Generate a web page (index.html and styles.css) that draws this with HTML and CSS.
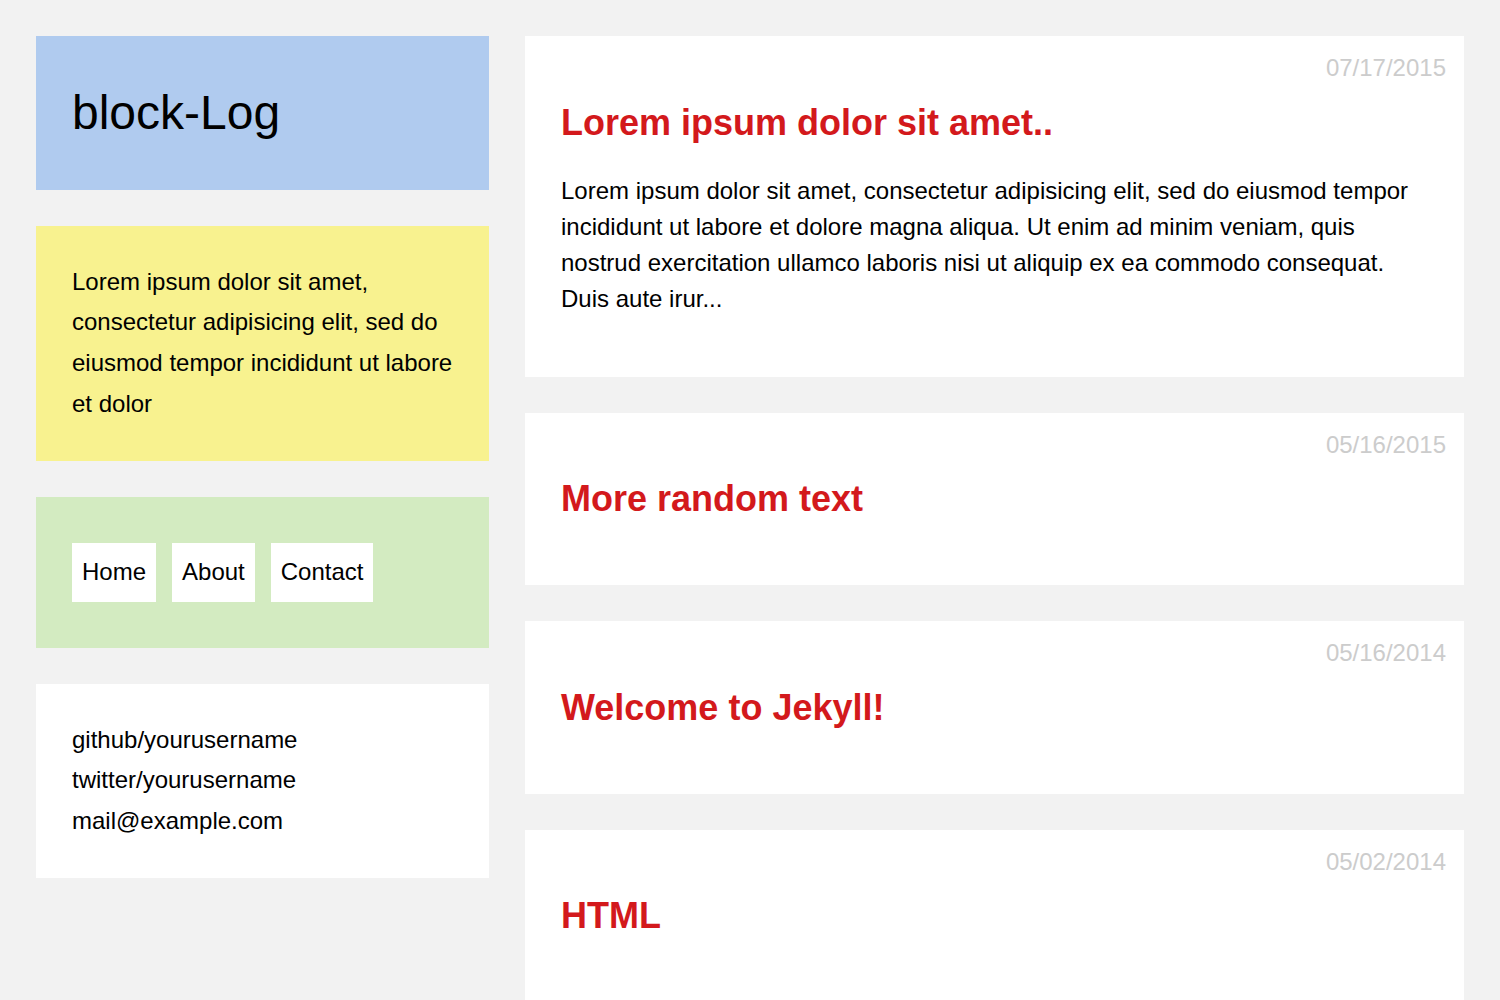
FILE: index.html
```html
<!DOCTYPE html>
<html lang="en">
<head>
<meta charset="utf-8">
<title>block-Log</title>
<link rel="stylesheet" href="styles.css">
</head>
<body>
<div class="page">
  <aside class="sidebar">
    <header class="box box-title">
      <h1 class="site-title">block-Log</h1>
    </header>
    <section class="box box-about">
      <p class="about-text">Lorem ipsum dolor sit amet, consectetur adipisicing elit, sed do eiusmod tempor incididunt ut labore et dolor</p>
    </section>
    <nav class="box box-nav">
      <a class="nav-link" href="#">Home</a>
      <a class="nav-link" href="#">About</a>
      <a class="nav-link" href="#">Contact</a>
    </nav>
    <section class="box box-social">
      <div class="social-line">github/yourusername</div>
      <div class="social-line">twitter/yourusername</div>
      <div class="social-line">mail@example.com</div>
    </section>
  </aside>
  <main class="posts">
    <article class="post">
      <div class="post-date">07/17/2015</div>
      <h2 class="post-title"><a href="#">Lorem ipsum dolor sit amet..</a></h2>
      <p class="post-excerpt">Lorem ipsum dolor sit amet, consectetur adipisicing elit, sed do eiusmod tempor incididunt ut labore et dolore magna aliqua. Ut enim ad minim veniam, quis nostrud exercitation ullamco laboris nisi ut aliquip ex ea commodo consequat. Duis aute irur...</p>
    </article>
    <article class="post">
      <div class="post-date">05/16/2015</div>
      <h2 class="post-title"><a href="#">More random text</a></h2>
    </article>
    <article class="post">
      <div class="post-date">05/16/2014</div>
      <h2 class="post-title"><a href="#">Welcome to Jekyll!</a></h2>
    </article>
    <article class="post">
      <div class="post-date">05/02/2014</div>
      <h2 class="post-title"><a href="#">HTML</a></h2>
    </article>
  </main>
</div>
</body>
</html>
```

FILE: styles.css
```css
* { box-sizing: border-box; }

html, body {
  margin: 0;
  padding: 0;
}

body {
  background: #f2f2f2;
  color: #000;
  font-family: "Liberation Sans", Arial, Helvetica, sans-serif;
  font-size: 24px;
  line-height: 1.7;
}

.page {
  display: grid;
  grid-template-columns: 453px 1fr;
  column-gap: 36px;
  padding: 36px;
  align-items: start;
}

.sidebar {
  display: flex;
  flex-direction: column;
  gap: 36px;
}

.box {
  padding: 36px;
}

.box-title {
  background: #b0cbef;
}

.site-title {
  margin: 0;
  font-size: 48px;
  font-weight: normal;
  line-height: 1.7;
}

.box-about {
  background: #f8f28f;
}

.about-text {
  margin: 0;
}

.box-nav {
  background: #d3ebc1;
  padding: 46px 36px;
  display: flex;
  gap: 16px;
}

.nav-link {
  display: block;
  background: #fff;
  color: #000;
  text-decoration: none;
  padding: 9px 10px;
  line-height: 1.7;
}

.box-social {
  background: #fff;
}

.social-line {
  line-height: 40.8px;
}

.posts {
  display: flex;
  flex-direction: column;
  gap: 36px;
}

.post {
  position: relative;
  background: #fff;
  padding: 36px;
}

.post-date {
  position: absolute;
  top: 18px;
  right: 18px;
  color: #cccccc;
  line-height: 1.15;
}

.post-title {
  margin: 29.75px 0;
  font-size: 36px;
  font-weight: bold;
  line-height: 41px;
}

.post-title a {
  color: #d3191c;
  text-decoration: none;
}

.post-excerpt {
  margin: 24px 0;
  line-height: 36px;
}
```
